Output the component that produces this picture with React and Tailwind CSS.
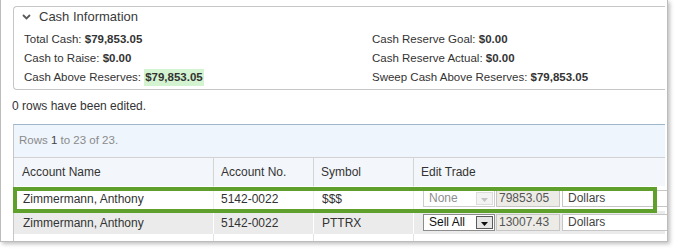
import React from 'react';

const Chevron = () => (
  <svg width="9" height="6" viewBox="0 0 9 6" className="shrink-0">
    <path d="M1 1 L4.5 4.5 L8 1" fill="none" stroke="#5a5a5a" strokeWidth="1.8" />
  </svg>
);

const TradeSelect = ({ value, disabled }) => (
  <div
    className={`flex h-[17px] w-[72px] items-center border bg-white ${
      disabled ? 'border-[#cdcdcd] text-[#8e8e8e]' : 'border-[#8c8c8c] text-[#111]'
    }`}
  >
    <span className="flex-1 pl-[5px] text-[12px] leading-[15px]">{value}</span>
    <span
      className={`mr-[1px] flex h-[13px] w-[17px] items-end justify-center pb-[2px] border ${
        disabled ? 'border-[#dcdcdc] bg-[#f3f3f3]' : 'border-[#5a5a5a] bg-[#e6e6e6]'
      }`}
    >
      <svg width="7" height="4" viewBox="0 0 7 4">
        <path d="M0 0 H7 L3.5 4 Z" fill={disabled ? '#c4c4c4' : '#111'} />
      </svg>
    </span>
  </div>
);

const EditTrade = ({ select, disabled, amount }) => (
  <div className="flex items-center pl-[9px]">
    <TradeSelect value={select} disabled={disabled} />
    <div className="ml-[1px] h-[17px] w-[64px] border border-[#c6c6c6] bg-[#ecebe6] pl-[2px] text-[12px] leading-[15px] text-[#555]">
      {amount}
    </div>
    <div className="ml-[2px] h-[17px] w-[110px] shrink-0 border border-[#c6c6c6] bg-white pl-[5px] text-[12px] leading-[15px] text-[#444]">
      Dollars
    </div>
  </div>
);

const rows = [
  { name: 'Zimmermann, Anthony', acct: '5142-0022', sym: '$$$', select: 'None', disabled: true, amount: '79853.05' },
  { name: 'Zimmermann, Anthony', acct: '5142-0022', sym: 'PTTRX', select: 'Sell All', disabled: false, amount: '13007.43' },
];

export default function App() {
  return (
    <div className="h-[252px] w-[678px] overflow-hidden bg-white font-['Liberation_Sans',Arial,sans-serif] text-[#333]">
      <div className="relative h-[242px] w-[668px] overflow-hidden border-x border-b border-[#bcbcbc] bg-white shadow-[2px_2px_4px_rgba(0,0,0,0.25)]">
        {/* cash information */}
        <div className="ml-[12px] mt-[6px] h-[84px] w-[652px] rounded-l-[4px] border border-r-0 border-[#c6c6c6]">
          <div className="flex h-[20px] items-center gap-[8px] pl-[8px]">
            <Chevron />
            <span className="text-[13px] text-[#3a3a3a]">Cash Information</span>
          </div>
          <div className="mt-[3px] grid grid-cols-[348px_1fr] pl-[10px] text-[11.5px]">
            <div className="flex h-[19px] items-center">
              Total Cash:&nbsp;<b>$79,853.05</b>
            </div>
            <div className="flex h-[19px] items-center">
              Cash Reserve Goal:&nbsp;<b>$0.00</b>
            </div>
            <div className="flex h-[19px] items-center">
              Cash to Raise:&nbsp;<b>$0.00</b>
            </div>
            <div className="flex h-[19px] items-center">
              Cash Reserve Actual:&nbsp;<b>$0.00</b>
            </div>
            <div className="flex h-[19px] items-center">
              Cash Above Reserves:&nbsp;
              <b className="bg-[#d3f3d1] px-[1px] leading-[17px]">$79,853.05</b>
            </div>
            <div className="flex h-[19px] items-center">
              Sweep Cash Above Reserves:&nbsp;<b>$79,853.05</b>
            </div>
          </div>
        </div>

        <div className="mt-[6px] flex h-[20px] items-center pl-[11px] text-[12px]">0 rows have been edited.</div>

        {/* grid */}
        <div className="ml-[12px] mt-[8px] w-[652px] border-l border-t border-l-[#c6c6c6] border-t-[#9db6c8]">
          <div className="h-[33px] border-b border-[#d2d2d2] bg-[#eef5fc] pl-[5px] pt-[8px] text-[11.5px] leading-[14px] text-[#8a8a8a]">
            Rows <span className="text-[#444]">1</span> to 23 of 23.
          </div>
          <div className="grid h-[28px] grid-cols-[200px_100px_100px_1fr] bg-[#f3f7fb] text-[12px] text-[#333]">
            <div className="flex items-center border-r border-[#d4d4d4] pl-[8px]">Account Name</div>
            <div className="flex items-center border-r border-[#d4d4d4] pl-[7px]">Account No.</div>
            <div className="flex items-center border-r border-[#d4d4d4] pl-[7px]">Symbol</div>
            <div className="flex items-center pl-[7px]">Edit Trade</div>
          </div>
          {rows.map((r, i) => (
            <div
              key={i}
              className={`grid grid-cols-[200px_100px_100px_1fr] text-[12px] text-[#333] ${
                i === 0 ? 'h-[25px] bg-white' : 'h-[23px] bg-[#ebebeb]'
              }`}
            >
              <div className={`flex items-center border-r pl-[9px] ${i === 0 ? 'border-[#eeeeee]' : 'border-white'}`}>{r.name}</div>
              <div className={`flex items-center border-r pl-[7px] ${i === 0 ? 'border-[#eeeeee]' : 'border-white'}`}>{r.acct}</div>
              <div className={`flex items-center border-r pl-[8px] ${i === 0 ? 'border-[#eeeeee]' : 'border-white'}`}>{r.sym}</div>
              <div className="flex items-center">
                <EditTrade select={r.select} disabled={r.disabled} amount={r.amount} />
              </div>
            </div>
          ))}
          <div className="grid h-[8px] grid-cols-[200px_100px_100px_1fr] bg-white">
            <div className="border-r border-[#e2e2e2]" />
            <div className="border-r border-[#e2e2e2]" />
            <div className="border-r border-[#e2e2e2]" />
            <div />
          </div>
        </div>

        {/* highlight annotation on the first row */}
        <div className="pointer-events-none absolute left-[12px] top-[187px] h-[26px] w-[644px] border-[4px] border-[#5fa02c]" />
      </div>
    </div>
  );
}
